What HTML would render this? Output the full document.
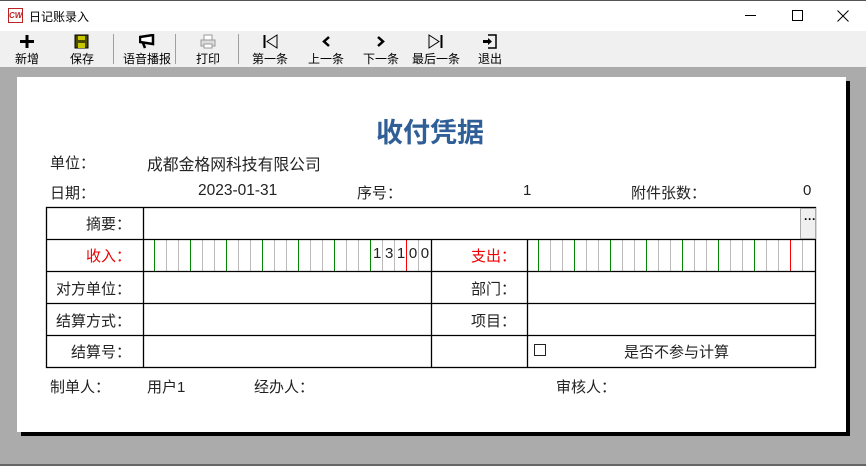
<!DOCTYPE html>
<html><head><meta charset="utf-8">
<style>
*{margin:0;padding:0;box-sizing:border-box}
body{width:866px;height:466px;overflow:hidden;background:#ababab;position:relative;font-family:"Liberation Sans","Noto Sans CJK SC",sans-serif;font-size:15px;color:#222}
.a{position:absolute;white-space:nowrap}
#tb{position:absolute;left:0;top:0;width:866px;height:31px;background:#fff;border-top:1px solid #555}
#bar{position:absolute;left:0;top:31px;width:866px;height:36px;background:#f0f0f0}
.btn{position:absolute;top:0;width:60px;height:36px;text-align:center;font-size:12px;color:#000}
.btn svg{position:absolute;left:22px;top:3px}
.btn span{position:absolute;left:0;right:0;top:19px}
.sep{position:absolute;top:3px;width:1px;height:30px;background:#a0a0a0}
#paper{position:absolute;left:17px;top:77px;width:829px;height:355px;background:#fff;box-shadow:4px 4px 0 #000}
.r{text-align:right}
</style></head><body>
<div id="tb">
 <div class="a" style="left:8px;top:7px;width:15px;height:15px;border:1px solid #b22;font:bold italic 8px 'Liberation Sans',sans-serif;color:#b22;line-height:13px;text-align:center">CW</div>
 <div class="a" style="left:29px;top:7px;font-size:12px;color:#000">日记账录入</div>
 <div class="a" style="left:745px;top:14px;width:11px;height:1px;background:#000"></div>
 <div class="a" style="left:792px;top:9px;width:11px;height:11px;border:1px solid #000"></div>
 <svg class="a" style="left:837px;top:9px" width="12" height="12"><path d="M0.5 0.5L11.5 11.5M11.5 0.5L0.5 11.5" stroke="#000"/></svg>
</div>
<div id="bar">
 <div class="btn" style="left:-3px"><svg width="16" height="15"><path d="M8 1V14M1 7.5H15" stroke="#000" stroke-width="3"/></svg><span>新增</span></div>
 <div class="btn" style="left:52px"><svg width="16" height="15"><rect x="1" y="1" width="13" height="13" fill="#4a4a00" stroke="#000"/><rect x="4" y="2" width="7" height="4" fill="#c8c800"/><rect x="4" y="9" width="7" height="5" fill="#c8c800"/></svg><span>保存</span></div>
 <div class="sep" style="left:113px"></div>
 <div class="btn" style="left:117px"><svg width="16" height="15"><path d="M1 3L14 1V10L1 8Z" fill="#fff" stroke="#000" stroke-width="2.5"/><path d="M4 9L6 14" stroke="#000" stroke-width="2.5"/></svg><span>语音播报</span></div>
 <div class="sep" style="left:175px"></div>
 <div class="btn" style="left:178px"><svg width="16" height="15"><rect x="4" y="1" width="8" height="5" fill="#fff" stroke="#999"/><rect x="1" y="6" width="14" height="6" fill="#ddd" stroke="#999"/><rect x="4" y="10" width="8" height="4" fill="#fff" stroke="#999"/></svg><span style="color:#000">打印</span></div>
 <div class="sep" style="left:238px"></div>
 <div class="btn" style="left:240px"><svg width="16" height="15"><path d="M2 1V14M3 1V14M15 1L5 7.5L15 14Z" stroke="#000" fill="none"/></svg><span>第一条</span></div>
 <div class="btn" style="left:296px"><svg width="16" height="15"><path d="M11 3L6 7.5L11 12" stroke="#000" stroke-width="2.5" fill="none"/></svg><span>上一条</span></div>
 <div class="btn" style="left:351px"><svg width="16" height="15"><path d="M5 3L10 7.5L5 12" stroke="#000" stroke-width="2.5" fill="none"/></svg><span>下一条</span></div>
 <div class="btn" style="left:406px"><svg width="16" height="15"><path d="M13 1V14M14 1V14M1 1L11 7.5L1 14Z" stroke="#000" fill="none"/></svg><span>最后一条</span></div>
 <div class="btn" style="left:460px"><svg width="16" height="15"><path d="M6 1H14V14H6" stroke="#000" fill="none" stroke-width="1.5"/><path d="M1 6H6V4L10 7.5L6 11V9H1Z" fill="#000"/></svg><span>退出</span></div>
</div>
<div class="a" style="left:0;top:464px;width:866px;height:2px;background:#666"></div>
<div id="paper"></div>
<div class="a" style="left:376px;top:111px;font-size:27px;font-weight:bold;color:#2f5f96">收付凭据</div>
<div class="a" style="left:50px;top:152px">单位：</div>
<div class="a" style="left:147px;top:152px;font-size:15.8px">成都金格网科技有限公司</div>
<div class="a" style="left:50px;top:182px">日期：</div>
<div class="a" style="left:198px;top:182px;font-size:15.5px">2023-01-31</div>
<div class="a" style="left:357px;top:182px">序号：</div>
<div class="a" style="left:523px;top:182px">1</div>
<div class="a" style="left:631px;top:182px">附件张数：</div>
<div class="a" style="left:803px;top:182px">0</div>
<svg class="a" style="left:0;top:0" width="866" height="466">
 <g stroke="#bbb" stroke-width="1">
  <path d="M166.5 240V271M178.5 240V271M202.5 240V271M214.5 240V271M238.5 240V271M250.5 240V271M274.5 240V271M286.5 240V271M310.5 240V271M322.5 240V271M346.5 240V271M358.5 240V271M382.5 240V271M394.5 240V271M418.5 240V271"/>
  <path d="M550.5 240V271M562.5 240V271M586.5 240V271M598.5 240V271M622.5 240V271M634.5 240V271M658.5 240V271M670.5 240V271M694.5 240V271M706.5 240V271M730.5 240V271M742.5 240V271M766.5 240V271M778.5 240V271M802.5 240V271"/>
 </g>
 <g stroke="#080" stroke-width="1">
  <path d="M154.5 240V271M190.5 240V271M226.5 240V271M262.5 240V271M298.5 240V271M334.5 240V271M370.5 240V271"/>
  <path d="M538.5 240V271M574.5 240V271M610.5 240V271M646.5 240V271M682.5 240V271M718.5 240V271M754.5 240V271"/>
 </g>
 <path d="M406.5 240V271M790.5 240V271" stroke="#f00"/>
 <g stroke="#000" stroke-width="1.3" fill="none">
  <rect x="46.5" y="207.5" width="769" height="160"/>
  <path d="M46 239.5H816M46 271.5H816M46 303.5H816M46 335.5H816"/>
  <path d="M143.5 207V367M431.5 239V367M527.5 239V367"/>
 </g>
 <rect x="800.5" y="208.5" width="15" height="30" fill="#f0f0f0" stroke="#aaa"/>
 <rect x="534.5" y="344.5" width="11" height="11" fill="#fff" stroke="#222"/>
</svg>
<div class="a" style="left:810px;top:212px;font-size:12px;font-weight:bold;color:#000;transform:translateX(-50%)">···</div>
<div class="a r" style="left:46px;width:85px;top:213px">摘要：</div>
<div class="a r" style="left:46px;width:85px;top:245px;color:#e00">收入：</div>
<div class="a" style="left:373px;top:245px;letter-spacing:3.6px;color:#222">13100</div>
<div class="a r" style="left:431px;width:85px;top:245px;color:#e00">支出：</div>
<div class="a r" style="left:46px;width:85px;top:278px">对方单位：</div>
<div class="a r" style="left:431px;width:85px;top:278px">部门：</div>
<div class="a r" style="left:46px;width:85px;top:310px">结算方式：</div>
<div class="a r" style="left:431px;width:85px;top:310px">项目：</div>
<div class="a r" style="left:46px;width:85px;top:341px">结算号：</div>
<div class="a" style="left:624px;top:341px">是否不参与计算</div>
<div class="a" style="left:50px;top:376px">制单人：</div>
<div class="a" style="left:147px;top:376px">用户1</div>
<div class="a" style="left:254px;top:376px">经办人：</div>
<div class="a" style="left:556px;top:376px">审核人：</div>
</body></html>
